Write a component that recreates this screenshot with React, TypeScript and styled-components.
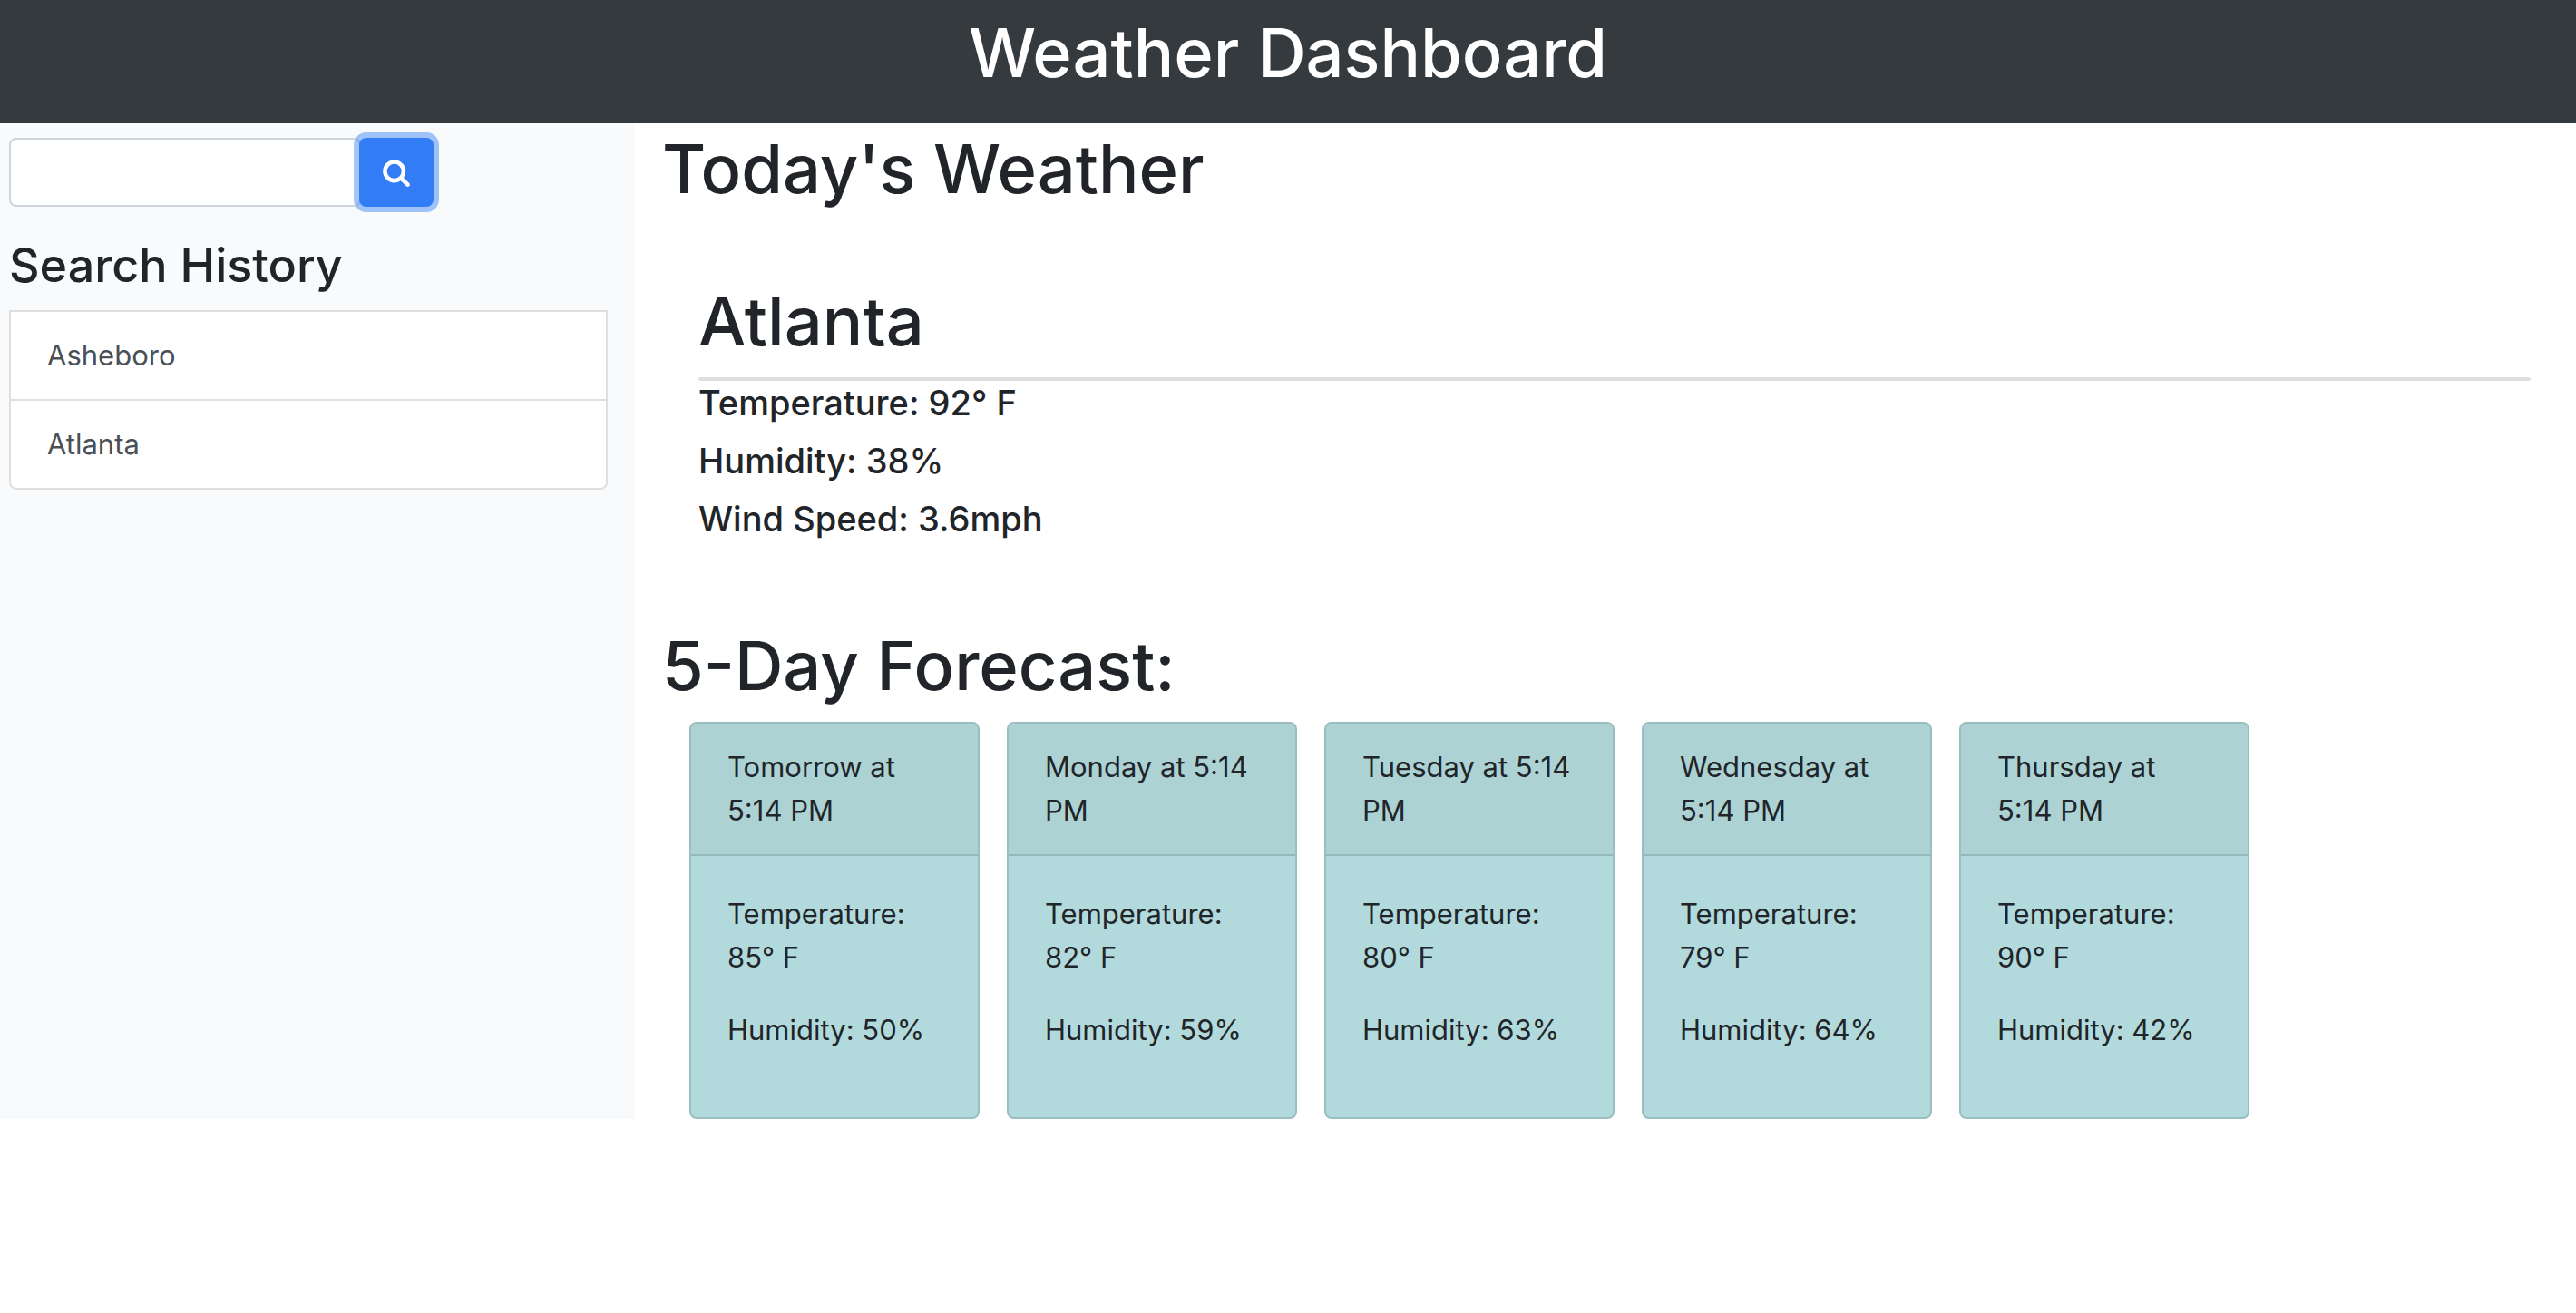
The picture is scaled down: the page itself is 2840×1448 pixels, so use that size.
import React, { useState } from "react";
import styled, { createGlobalStyle } from "styled-components";

const GlobalStyle = createGlobalStyle`
  *, *::before, *::after { box-sizing: border-box; }
  body {
    margin: 0;
    background: #fff;
    color: #212529;
    font-family: Inter, "Liberation Sans", sans-serif;
    font-size: 32px;
    line-height: 48px;
  }
`;

const Header = styled.header`
  padding: 8px 16px 28px;
  background: #353a3e;
  color: #fff;
  text-align: center;
`;

const Title = styled.h1`
  margin: 0;
  font-size: 74px;
  font-weight: 500;
  line-height: 100px;
`;

const SectionTitle = styled(Title).attrs({ as: "h2" })``;

const Page = styled.div`
  display: grid;
  grid-template-columns: minmax(320px, 700px) minmax(0, 1fr);
`;

const Sidebar = styled.aside`
  padding: 16px 30px 0 10px;
  background: #f8fafc;
`;

const SearchForm = styled.form`
  display: flex;
  margin-bottom: 32px;
`;

const SearchInput = styled.input`
  width: 388px;
  height: 76px;
  padding: 12px 24px;
  border: 2px solid #ced4da;
  border-radius: 8px;
  background: #fff;
  color: #495057;
  font: inherit;
`;

const SearchButton = styled.button`
  display: flex;
  align-items: center;
  justify-content: center;
  width: 82px;
  height: 76px;
  margin-left: -2px;
  padding: 0;
  border: 0;
  border-radius: 8px;
  background: #327df6;
  color: #fff;
  box-shadow: 0 0 0 6px rgba(70, 140, 246, 0.5);
  cursor: pointer;
  z-index: 1;
`;

const HistoryTitle = styled.h3`
  margin: 0 0 16px;
  font-size: 52px;
  font-weight: 500;
  line-height: 66px;
`;

const HistoryList = styled.ul`
  margin: 0;
  padding: 0;
  list-style: none;
  border: 2px solid #dfdfdf;
  border-radius: 0 0 8px 8px;
  background: #fff;
  overflow: hidden;
`;

const HistoryItem = styled.li`
  & + & {
    border-top: 2px solid #dfdfdf;
  }
`;

const HistoryButton = styled.button`
  display: block;
  width: 100%;
  padding: 24px 40px;
  border: 0;
  background: transparent;
  color: #495057;
  font: inherit;
  font-size: 31px;
  text-align: left;
  cursor: pointer;
`;

const Main = styled.main`
  padding: 0 50px 0 30px;
`;

const Current = styled.section`
  padding: 68px 0 72px 40px;
`;

const Rule = styled.hr`
  height: 4px;
  margin: 12px 0 0;
  border: 0;
  border-radius: 2px;
  background: #dfdfdf;
`;

const Reading = styled.p`
  margin: 0 0 16px;
  font-size: 38px;
  font-weight: 500;
  line-height: 48px;
`;

const Forecast = styled.div`
  display: flex;
  flex-wrap: wrap;
  gap: 30px;
  padding: 12px 0 0 30px;
`;

const Card = styled.article`
  width: 320px;
  border: 2px solid #9abdc0;
  border-radius: 8px;
  background: #b2dadc;
  font-size: 31px;
  overflow: hidden;
`;

const CardHeader = styled.header`
  padding: 24px 40px;
  border-bottom: 2px solid #97b8ba;
  background: #acd2d4;
`;

const CardBody = styled.div`
  padding: 40px 40px 72px;
`;

const CardText = styled.p`
  margin: 0;

  & + & {
    margin-top: 32px;
  }
`;

function SearchIcon() {
  return (
    <svg width="32" height="32" viewBox="0 0 1792 1792" fill="currentColor" aria-hidden="true">
      <path d="M1216 832q0-185-131.5-316.5t-316.5-131.5-316.5 131.5-131.5 316.5 131.5 316.5 316.5 131.5 316.5-131.5 131.5-316.5zm512 832q0 52-38 90t-90 38q-54 0-90-38l-343-342q-179 124-399 124-143 0-273.5-55.5t-225-150-150-225-55.5-273.5 55.5-273.5 150-225 225-150 273.5-55.5 273.5 55.5 225 150 150 225 55.5 273.5q0 220-124 399l343 343q37 37 37 90z" />
    </svg>
  );
}

const cities = ["Asheboro", "Atlanta"];

const days = [
  { when: "Tomorrow at 5:14 PM", temperature: 85, humidity: 50 },
  { when: "Monday at 5:14 PM", temperature: 82, humidity: 59 },
  { when: "Tuesday at 5:14 PM", temperature: 80, humidity: 63 },
  { when: "Wednesday at 5:14 PM", temperature: 79, humidity: 64 },
  { when: "Thursday at 5:14 PM", temperature: 90, humidity: 42 },
];

export default function App() {
  const [query, setQuery] = useState("");

  return (
    <>
      <GlobalStyle />
      <Header>
        <Title>Weather Dashboard</Title>
      </Header>
      <Page>
        <Sidebar>
          <SearchForm onSubmit={(event) => event.preventDefault()}>
            <SearchInput
              type="text"
              aria-label="City"
              value={query}
              onChange={(event) => setQuery(event.target.value)}
            />
            <SearchButton type="submit" aria-label="Search">
              <SearchIcon />
            </SearchButton>
          </SearchForm>
          <HistoryTitle>Search History</HistoryTitle>
          <HistoryList>
            {cities.map((city) => (
              <HistoryItem key={city}>
                <HistoryButton type="button">{city}</HistoryButton>
              </HistoryItem>
            ))}
          </HistoryList>
        </Sidebar>
        <Main>
          <SectionTitle>Today's Weather</SectionTitle>
          <Current>
            <SectionTitle>Atlanta</SectionTitle>
            <Rule />
            <Reading>Temperature: 92° F</Reading>
            <Reading>Humidity: 38%</Reading>
            <Reading>Wind Speed: 3.6mph</Reading>
          </Current>
          <SectionTitle>5-Day Forecast:</SectionTitle>
          <Forecast>
            {days.map((day) => (
              <Card key={day.when}>
                <CardHeader>{day.when}</CardHeader>
                <CardBody>
                  <CardText>Temperature: {day.temperature}° F</CardText>
                  <CardText>Humidity: {day.humidity}%</CardText>
                </CardBody>
              </Card>
            ))}
          </Forecast>
        </Main>
      </Page>
    </>
  );
}
